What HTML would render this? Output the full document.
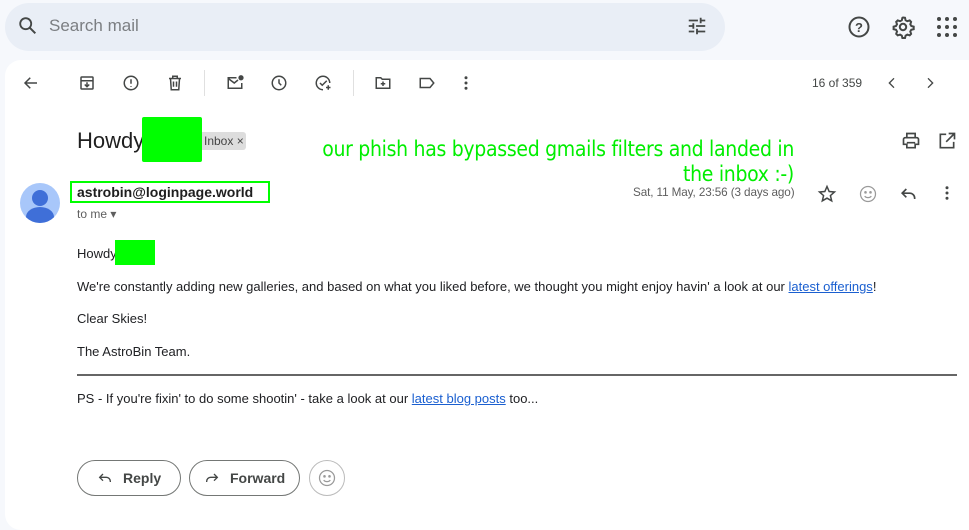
<!DOCTYPE html>
<html><head><meta charset="utf-8"><style>
*{box-sizing:border-box;margin:0;padding:0}
body{width:969px;height:511px;overflow:hidden;background:#f6f8fc;font-family:"Liberation Sans",Arial,sans-serif;color:#202124;position:relative}
.abs{position:absolute}
.search{left:5px;top:3px;width:720px;height:48px;background:#e9eef6;border-radius:24px}
.card{left:5px;top:60px;width:980px;height:470px;background:#fff;border-radius:16px}
svg{position:absolute}
.t13{font-size:13px}
a{color:#1a5fd0;text-decoration:underline}
.btn{position:absolute;top:460px;height:36px;border:1px solid #747775;border-radius:18px;font-size:14px;color:#444746;font-weight:bold;line-height:34px}
</style></head><body>
<div class="abs search"></div>
<svg style="left:17px;top:15px" width="22" height="22" viewBox="0 0 24 24"><circle cx="9.5" cy="9.5" r="6" fill="none" stroke="#444746" stroke-width="2"/><path d="M14 14l6 6" stroke="#444746" stroke-width="2.2"/></svg>
<div class="abs" style="left:49px;top:16px;font-size:17px;color:#7b7e82">Search mail</div>
<svg style="left:686px;top:15px" width="22" height="22" viewBox="0 0 24 24" fill="#444746"><path d="M3 17v2h6v-2H3zM3 5v2h10V5H3zm10 16v-2h8v-2h-8v-2h-2v6h2zM7 9v2H3v2h4v2h2V9H7zm14 4v-2H11v2h10zm-6-4h2V7h4V5h-4V3h-2v6z"/></svg>
<svg style="left:847px;top:15px" width="24" height="24" viewBox="0 0 24 24"><circle cx="12" cy="12" r="9.5" fill="none" stroke="#444746" stroke-width="2"/><text x="12" y="17" font-size="13" font-weight="bold" text-anchor="middle" fill="#444746" font-family="Liberation Sans">?</text></svg>
<svg style="left:891px;top:15px" width="24" height="24" viewBox="0 0 24 24"><path d="M12 2.5l2 .3.6 2.4 1.7 1 2.4-.8 1.4 1.5-.8 2.4 1 1.7 2.4.6v2.6l-2.4.6-1 1.7.8 2.4-1.4 1.5-2.4-.8-1.7 1-.6 2.4h-2.6l-.6-2.4-1.7-1-2.4.8-1.5-1.5.8-2.4-1-1.7-2.4-.6v-2.6l2.4-.6 1-1.7-.8-2.4 1.5-1.5 2.4.8 1.7-1 .6-2.4z" fill="none" stroke="#444746" stroke-width="2"/><circle cx="12" cy="12" r="3.2" fill="none" stroke="#444746" stroke-width="2"/></svg>
<svg style="left:936px;top:16px" width="22" height="22" viewBox="0 0 22 22" fill="#444746"><circle cx="3" cy="3" r="2"/><circle cx="11" cy="3" r="2"/><circle cx="19" cy="3" r="2"/><circle cx="3" cy="11" r="2"/><circle cx="11" cy="11" r="2"/><circle cx="19" cy="11" r="2"/><circle cx="3" cy="19" r="2"/><circle cx="11" cy="19" r="2"/><circle cx="19" cy="19" r="2"/></svg>
<div class="abs card"></div>
<svg style="left:22px;top:74px" width="18" height="18" viewBox="0 0 24 24"><path d="M20 12H5m6-7l-7 7 7 7" fill="none" stroke="#444746" stroke-width="2"/></svg>
<svg style="left:78px;top:74px" width="18" height="18" viewBox="0 0 24 24" fill="none" stroke="#444746" stroke-width="2"><rect x="4" y="4" width="16" height="16" rx="1"/><path d="M4 9h16M12 11v6m-3-3l3 3 3-3"/></svg>
<svg style="left:122px;top:74px" width="18" height="18" viewBox="0 0 24 24" fill="none" stroke="#444746" stroke-width="2"><circle cx="12" cy="12" r="9"/><path d="M12 7v6m0 3v1"/></svg>
<svg style="left:166px;top:74px" width="18" height="18" viewBox="0 0 24 24" fill="none" stroke="#444746" stroke-width="2"><path d="M4 6h16M9 6V3h6v3M6 6l1 15h10l1-15M10 10v7m4-7v7"/></svg>
<div class="abs" style="left:204px;top:70px;width:1px;height:26px;background:#e0e0e0"></div>
<svg style="left:226px;top:74px" width="18" height="18" viewBox="0 0 24 24" fill="none" stroke="#444746" stroke-width="2"><path d="M14 5H3v14h18v-7M3 6l8 6 5-4"/><circle cx="20" cy="5" r="2.5" fill="#444746"/></svg>
<svg style="left:270px;top:74px" width="18" height="18" viewBox="0 0 24 24" fill="none" stroke="#444746" stroke-width="2"><circle cx="12" cy="12" r="9"/><path d="M12 7v5l3 3"/></svg>
<svg style="left:314px;top:74px" width="18" height="18" viewBox="0 0 24 24" fill="none" stroke="#444746" stroke-width="2"><path d="M21 12a9 9 0 1 0-9 9M8 12l3 3 6-6M19 15v6m-3-3h6"/></svg>
<div class="abs" style="left:353px;top:70px;width:1px;height:26px;background:#e0e0e0"></div>
<svg style="left:374px;top:74px" width="18" height="18" viewBox="0 0 24 24" fill="none" stroke="#444746" stroke-width="2"><path d="M3 5h6l2 2h10v12H3zM12 10v6m-3-3h6"/></svg>
<svg style="left:418px;top:74px" width="18" height="18" viewBox="0 0 24 24" fill="none" stroke="#444746" stroke-width="2"><path d="M3 6h13l5 6-5 6H3z"/></svg>
<svg style="left:462px;top:74px" width="8" height="18" viewBox="0 0 8 24" fill="#444746"><circle cx="4" cy="5" r="2"/><circle cx="4" cy="12" r="2"/><circle cx="4" cy="19" r="2"/></svg>
<div class="abs" style="left:812px;top:76px;font-size:12px;color:#444746">16 of 359</div>
<svg style="left:884px;top:75px" width="16" height="16" viewBox="0 0 24 24"><path d="M15 5l-7 7 7 7" fill="none" stroke="#444746" stroke-width="2"/></svg>
<svg style="left:922px;top:75px" width="16" height="16" viewBox="0 0 24 24"><path d="M9 5l7 7-7 7" fill="none" stroke="#444746" stroke-width="2"/></svg>
<div class="abs" style="left:77px;top:128px;font-size:22px;color:#1f1f1f">Howdy</div>
<div class="abs" style="left:198px;top:132px;width:48px;height:18px;background:#ddd;border-radius:3px;font-size:12px;color:#444;line-height:18px;padding-left:6px">Inbox ×</div>
<div class="abs" style="left:142px;top:117px;width:60px;height:45px;background:#00ff00;border-radius:2px"></div>
<div class="abs" style="left:300px;top:137px;width:494px;text-align:right;font-size:21px;color:#00ee00;line-height:25px;font-family:'DejaVu Sans Condensed','DejaVu Sans',sans-serif;letter-spacing:-0.3px">our phish has bypassed gmails filters and landed in the inbox :-)</div>
<svg style="left:901px;top:131px" width="20" height="20" viewBox="0 0 24 24" fill="none" stroke="#444746" stroke-width="2"><path d="M7 8V3h10v5M5 8h14a2 2 0 0 1 2 2v6h-4v4H7v-4H3v-6a2 2 0 0 1 2-2zM7 14h10"/></svg>
<svg style="left:937px;top:131px" width="20" height="20" viewBox="0 0 24 24" fill="none" stroke="#444746" stroke-width="2"><path d="M11 4H4v16h16v-7M14 3h7v7M21 3l-10 10"/></svg>
<div class="abs" style="left:20px;top:183px;width:40px;height:40px;border-radius:50%;background:#a8c7fa;overflow:hidden"><div class="abs" style="left:12px;top:7px;width:16px;height:16px;border-radius:50%;background:#3f6fd8"></div><div class="abs" style="left:6px;top:24px;width:28px;height:20px;border-radius:50%;background:#3f6fd8"></div></div>
<div class="abs" style="left:70px;top:181px;width:200px;height:22px;border:2px solid #00ff00"></div>
<div class="abs" style="left:77px;top:184px;font-size:14px;font-weight:bold;color:#1f1f1f">astrobin@loginpage.world</div>
<div class="abs" style="left:77px;top:207px;font-size:12px;color:#5e5e5e">to me ▾</div>
<div class="abs" style="left:633px;top:186px;font-size:11.7px;color:#5e5e5e;letter-spacing:-0.1px">Sat, 11 May, 23:56 (3 days ago)</div>
<svg style="left:817px;top:184px" width="20" height="20" viewBox="0 0 24 24" fill="none" stroke="#444746" stroke-width="1.8"><path d="M12 3l2.6 6 6.4.6-4.9 4.3 1.5 6.3L12 17l-5.6 3.2 1.5-6.3L3 9.6 9.4 9z"/></svg>
<svg style="left:858px;top:184px" width="20" height="20" viewBox="0 0 24 24" fill="none" stroke="#9a9a9a" stroke-width="1.5"><circle cx="12" cy="12" r="9"/><circle cx="9" cy="10" r=".8" fill="#9a9a9a"/><circle cx="15" cy="10" r=".8" fill="#9a9a9a"/><path d="M8 14.5c2 2.5 6 2.5 8 0"/></svg>
<svg style="left:898px;top:184px" width="20" height="20" viewBox="0 0 24 24" fill="none" stroke="#444746" stroke-width="2"><path d="M10 6l-5 5 5 5M5 11h9a6 6 0 0 1 6 6v1"/></svg>
<svg style="left:943px;top:184px" width="8" height="18" viewBox="0 0 8 24" fill="#444746"><circle cx="4" cy="5" r="2"/><circle cx="4" cy="12" r="2"/><circle cx="4" cy="19" r="2"/></svg>
<div class="abs t13" style="left:77px;top:246px">Howdy</div>
<div class="abs" style="left:115px;top:240px;width:40px;height:25px;background:#00ff00"></div>
<div class="abs t13" style="left:77px;top:279px">We're constantly adding new galleries, and based on what you liked before, we thought you might enjoy havin' a look at our <a>latest offerings</a>!</div>
<div class="abs t13" style="left:77px;top:311px">Clear Skies!</div>
<div class="abs t13" style="left:77px;top:344px">The AstroBin Team.</div>
<div class="abs" style="left:77px;top:374px;width:880px;height:2px;background:#666"></div>
<div class="abs t13" style="left:77px;top:391px">PS - If you're fixin' to do some shootin' - take a look at our <a>latest blog posts</a> too...</div>
<div class="btn" style="left:77px;width:104px;padding-left:45px">Reply</div>
<svg style="left:96px;top:470px" width="18" height="16" viewBox="0 0 24 24" fill="none" stroke="#444746" stroke-width="2"><path d="M9 6l-5 5 5 5M4 11h10a6 6 0 0 1 6 6v1"/></svg>
<div class="btn" style="left:189px;width:111px;padding-left:40px">Forward</div>
<svg style="left:203px;top:470px" width="18" height="16" viewBox="0 0 24 24" fill="none" stroke="#444746" stroke-width="2"><path d="M15 6l5 5-5 5M20 11H10a6 6 0 0 0-6 6v1"/></svg>
<div class="abs" style="left:309px;top:460px;width:36px;height:36px;border:1px solid #bbb;border-radius:50%"></div>
<svg style="left:317px;top:468px" width="20" height="20" viewBox="0 0 24 24" fill="none" stroke="#9a9a9a" stroke-width="1.5"><circle cx="12" cy="12" r="9"/><circle cx="9" cy="10" r=".8" fill="#9a9a9a"/><circle cx="15" cy="10" r=".8" fill="#9a9a9a"/><path d="M8 14.5c2 2.5 6 2.5 8 0"/></svg>
</body></html>
